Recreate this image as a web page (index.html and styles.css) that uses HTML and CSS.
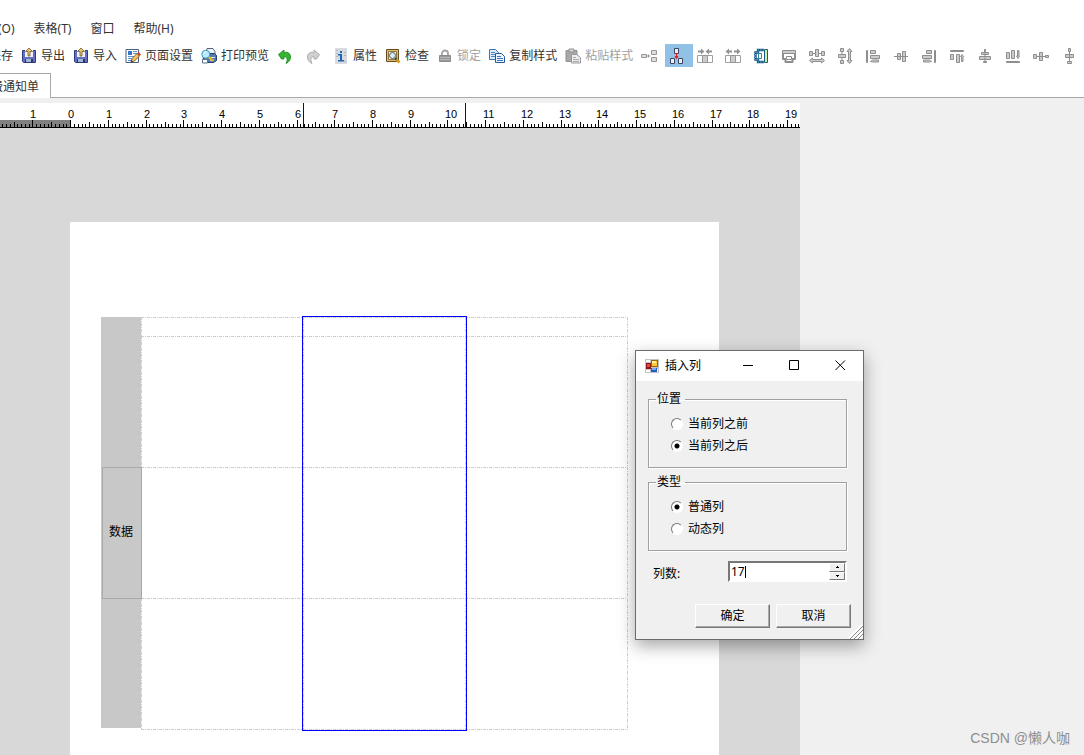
FILE: index.html
```html
<!DOCTYPE html>
<html lang="zh-CN">
<head>
<meta charset="utf-8">
<title>报表设计器</title>
<link rel="stylesheet" href="styles.css">
</head>
<body class="app">
<nav class="menu">
  <button class="menu-item">格式(O)</button>
  <button class="menu-item">表格(T)</button>
  <button class="menu-item">窗口</button>
  <button class="menu-item">帮助(H)</button>
</nav>

<div class="toolbar">
  <button class="tool"><svg class="icon"><use href="#i-disk"/></svg>保存</button>
  <button class="tool"><svg class="icon"><use href="#i-disk"/></svg>导出</button>
  <button class="tool"><svg class="icon"><use href="#i-disk"/></svg>导入</button>
  <button class="tool"><svg class="icon"><use href="#i-page"/></svg>页面设置</button>
  <button class="tool"><svg class="icon"><use href="#i-preview"/></svg>打印预览</button>
  <button class="tool tool-icon" aria-label="撤销"><svg class="icon"><use href="#i-undo"/></svg></button>
  <button class="tool tool-icon" aria-label="重做"><svg class="icon"><use href="#i-redo"/></svg></button>
  <button class="tool"><svg class="icon"><use href="#i-info"/></svg>属性</button>
  <button class="tool"><svg class="icon"><use href="#i-check"/></svg>检查</button>
  <button class="tool" disabled><svg class="icon"><use href="#i-lock"/></svg>锁定</button>
  <button class="tool"><svg class="icon"><use href="#i-copy"/></svg>复制样式</button>
  <button class="tool" disabled><svg class="icon"><use href="#i-paste"/></svg>粘贴样式</button>
  <button class="tool tool-icon" aria-label="合并"><svg class="icon"><use href="#i-merge"/></svg></button>
  <button class="tool tool-icon is-active" aria-label="拆分"><svg class="icon"><use href="#i-split"/></svg></button>
  <button class="tool tool-icon" aria-label="缩小间距"><svg class="icon"><use href="#i-in"/></svg></button>
  <button class="tool tool-icon" aria-label="增大间距"><svg class="icon"><use href="#i-out"/></svg></button>
  <button class="tool tool-icon" aria-label="适应高度"><svg class="icon"><use href="#i-fith"/></svg></button>
  <button class="tool tool-icon" aria-label="适应宽度"><svg class="icon"><use href="#i-fitw"/></svg></button>
  <button class="tool tool-icon" aria-label="等宽"><svg class="icon"><use href="#i-eqw"/></svg></button>
  <button class="tool tool-icon" aria-label="等高"><svg class="icon"><use href="#i-eqh"/></svg></button>
  <button class="tool tool-icon" aria-label="左对齐"><svg class="icon"><use href="#i-left"/></svg></button>
  <button class="tool tool-icon" aria-label="垂直居中"><svg class="icon"><use href="#i-mid"/></svg></button>
  <button class="tool tool-icon" aria-label="右对齐"><svg class="icon"><use href="#i-right"/></svg></button>
  <button class="tool tool-icon" aria-label="顶端对齐"><svg class="icon"><use href="#i-top"/></svg></button>
  <button class="tool tool-icon" aria-label="水平居中"><svg class="icon"><use href="#i-center"/></svg></button>
  <button class="tool tool-icon" aria-label="底端对齐"><svg class="icon"><use href="#i-bottom"/></svg></button>
  <button class="tool tool-icon" aria-label="横向分布"><svg class="icon"><use href="#i-disth"/></svg></button>
  <button class="tool tool-icon" aria-label="纵向分布"><svg class="icon"><use href="#i-distv"/></svg></button>
</div>

<div class="tabs">
  <button class="tab">费通知单</button>
</div>

<main class="workspace">
  <section class="designer">
    <svg class="ruler" id="ruler" aria-label="标尺"></svg>
    <div class="canvas">
      <div class="paper">
        <div class="bands">
          <div class="band-label">数据</div>
        </div>
        <div class="cells">
          <div class="cell"></div><div class="cell"></div><div class="cell"></div>
          <div class="cell"></div><div class="cell"></div><div class="cell"></div>
          <div class="cell"></div><div class="cell"></div><div class="cell"></div>
          <div class="cell"></div><div class="cell"></div><div class="cell"></div>
          <div class="selection"></div>
        </div>
      </div>
    </div>
  </section>
</main>

<form class="dialog" role="dialog" aria-labelledby="dialog-title">
  <header class="titlebar">
    <svg class="app-icon" viewBox="0 0 14 14" shape-rendering="crispEdges">
      <path fill="#c3c3c3" d="M0 0h14v14H0z"/>
      <path fill="#fff" d="M1 1h4v2H1zM1 11h3v2H1zM12 10h1v3h-1zM4 11h1v2H4z"/>
      <path fill="#8d1515" d="M1 4h5v6H1z"/><path fill="#e04b38" d="M2 5h3v3H2z"/>
      <path fill="#9a6a00" d="M6 1h7v7H6z"/><path fill="#ffc83a" d="M7 2h5v5H7z"/><path fill="#fff0a0" d="M7 2h4v2H7z"/>
      <path fill="#2559c5" d="M6 9h6v4H6z"/><path fill="#78aaf5" d="M7 9h4v2H7z"/>
    </svg>
    <h1 class="dialog-title" id="dialog-title">插入列</h1>
    <button type="button" class="caption" aria-label="最小化"><svg class="glyph" viewBox="0 0 11 11"><path d="M0 5.500h10"/></svg></button>
    <button type="button" class="caption" aria-label="最大化"><svg class="glyph" viewBox="0 0 11 11"><path d="M.5.5h9v9h-9z"/></svg></button>
    <button type="button" class="caption" aria-label="关闭"><svg class="glyph" viewBox="0 0 11 11"><path d="M.5.5l9.500 9.500M10 .5L.5 10"/></svg></button>
  </header>
  <div class="dialog-body">
    <fieldset class="group">
      <legend class="group-title">位置</legend>
      <label class="option"><input class="radio" type="radio" name="pos">当前列之前</label>
      <label class="option"><input class="radio" type="radio" name="pos" checked>当前列之后</label>
    </fieldset>
    <fieldset class="group">
      <legend class="group-title">类型</legend>
      <label class="option"><input class="radio" type="radio" name="kind" checked>普通列</label>
      <label class="option"><input class="radio" type="radio" name="kind">动态列</label>
    </fieldset>
    <div class="field">
      <label for="count">列数:</label>
      <div class="spin">
        <input class="spin-input" id="count" type="text" value="17">
        <span class="caret"></span>
        <div class="spin-buttons">
          <button type="button" class="spin-button" aria-label="增加"><svg class="arrow" viewBox="0 0 3 2"><path d="M1 0h1v1h1v1H0V1h1z"/></svg></button>
          <button type="button" class="spin-button" aria-label="减少"><svg class="arrow" viewBox="0 0 3 2"><path d="M0 0h3v1H2v1H1V1H0z"/></svg></button>
        </div>
      </div>
    </div>
    <div class="actions">
      <button type="button" class="push">确定</button>
      <button type="button" class="push">取消</button>
    </div>
  </div>
  <svg class="grip" viewBox="0 0 14 14"><path class="grip-light" d="M0 14L14 0M5 14l9-9M9 14l5-5"/><path class="grip-dark" d="M1 14L14 1M5 14l9-9M9 14l5-5"/></svg>
</form>

<p class="credit">CSDN @懒人咖</p>

<svg class="sprite" aria-hidden="true">
  <symbol id="i-disk" viewBox="0 0 16 16">
    <path d="M1.500 2.500h13v12h-12l-1-1z" fill="#6570c4" stroke="#303a80"/>
    <path d="M4 2h8v7H4z" fill="#eef0fa"/><path d="M4 11h8v4H4z" fill="#2c3570"/><path d="M5 11h5v3H5z" fill="#9fb9d5"/>
    <path d="M8 0l3.500 3.500H9V8H7V3.500H4.500z" fill="#e9c46c" stroke="#5e4a1d" stroke-width=".7"/>
  </symbol>
  <symbol id="i-page" viewBox="0 0 16 16">
    <path d="M1 1.500h12.500v13H1z" fill="#fff" stroke="#4c6078"/>
    <path d="M3 3h4v4H3z" fill="#3479c8"/><path d="M8 3.500h4M8 5.500h4M3 8.500h8M3 10.500h6M3 12.500h4" stroke="#5793cf"/>
    <path d="M6 14l1-3.500 5-5 2.500 2.500-5 5z" fill="#f6c260" stroke="#70491e" stroke-width=".8"/>
    <path d="M12 5.500L13.500 4 16 6.500 14.500 8z" fill="#d33c27"/><path d="M6 14l.5-1.700L8 13.500z" fill="#222"/>
  </symbol>
  <symbol id="i-preview" viewBox="0 0 16 16">
    <path d="M6 .5h6l2 3v3H5z" fill="#eef4fb" stroke="#50647a"/>
    <path d="M3 5.500h10.500l2 2v5l-3 2H5l-3-2z" fill="#5377ae" stroke="#253d6c"/>
    <path d="M9 9.500h5M9 12h4" stroke="#dce8f5"/>
    <circle cx="4.800" cy="6.300" r="4" fill="#b8ecff" stroke="#3c96bd"/><path d="M3 5l2-2" stroke="#fff"/>
    <path d="M8 9l3.500 4" stroke="#e5bd20" stroke-width="2.400"/>
    <path d="M1.500 11.500h5v3.500h-5z" fill="#fff" stroke="#5d7290"/>
  </symbol>
  <symbol id="i-undo" viewBox="0 0 16 16"><path d="M1.500 6.500L7 2v2.500c4-1 6.500 1 6.500 4.500 0 3-1.500 5-4.500 6.500 1-2 1.500-4 .8-5.300C9.300 9 8.300 8.500 7 8.800V11H4.500z" fill="#35b52e" stroke="#14851a" stroke-width=".8"/></symbol>
  <symbol id="i-redo" viewBox="0 0 16 16"><path d="M14.500 6.500L9 2v2.500C5 3.500 2.500 5.500 2.500 9c0 3 1.500 5 4.500 6.500-1-2-1.500-4-.8-5.300C6.700 9 7.700 8.500 9 8.800V11h2.500z" fill="#d0d0d0" stroke="#a0a0a0" stroke-width=".8"/></symbol>
  <symbol id="i-info" viewBox="0 0 16 16"><path d="M2 0h12v16H2z" fill="#d8dce0"/><path d="M3 2.500h2M3 5.500h2M3 8.500h2M11 4.500h2M11 7.500h2M11 13.500h2" stroke="#aeb6c0"/><path d="M7 3h2v2H7zM5 6h4v6h2v1.500H5V12h2V7.500H5z" fill="#1d65b2"/></symbol>
  <symbol id="i-check" viewBox="0 0 16 16">
    <path d="M1.500 1.500h12v12h-12z" fill="#e1bd70" stroke="#654b1e"/><path d="M3.500 3.500h8v8h-8z" fill="#fff7d9" stroke="#8f743d"/>
    <circle cx="7.500" cy="7.500" r="3" fill="#dcecf0" stroke="#48636d"/><path d="M10 10l2 2" stroke="#444" stroke-width="2"/><path d="M11.500 11.500l3 3" stroke="#d49a20" stroke-width="2.600"/>
  </symbol>
  <symbol id="i-lock" viewBox="0 0 16 16"><path d="M5 7.500V5.500a3 3 0 016 0v2" fill="none" stroke="#a5a5a5" stroke-width="1.800"/><path d="M2.500 7.500h11v6h-11z" fill="#9b9b9b" stroke="#8c8c8c"/><path d="M3 9.500h10M3 11.500h10" stroke="#b4b4b4"/></symbol>
  <symbol id="i-copy" viewBox="0 0 16 16">
    <path d="M.5 1.500h6l3 3v7h-9z" fill="#dceafa" stroke="#3976bd"/><path d="M2 4.500h4M2 6.500h5M2 8.500h4" stroke="#4c88c7"/>
    <path d="M6.500 5.500h6l3 3v6h-9z" fill="#eef5fd" stroke="#24599d"/><path d="M8 8.500h4M8 10.500h6M8 12.500h6" stroke="#3976bd"/>
  </symbol>
  <symbol id="i-paste" viewBox="0 0 16 16"><path d="M1 2.500h11v11H1z" fill="#a8a8a8" stroke="#919191"/><path d="M4 1h5v3H4z" fill="#d6d6d6" stroke="#919191"/><path d="M6.500 6.500h5l4 3v5.500h-9z" fill="#eee" stroke="#999"/><path d="M8 9.500h3M8 11.500h6M8 13.500h6" stroke="#aaa"/></symbol>
  <symbol id="i-merge" viewBox="0 0 16 16"><g fill="#ddd" stroke="#979797"><path d="M.5 6.500h5v3h-5zM10.500 2.500h5v4h-5zM10.500 9.500h5v4h-5z"/><path d="M6 8h3.500M7.500 6.500v3" fill="none"/></g></symbol>
  <symbol id="i-split" viewBox="0 0 16 16"><g fill="#e8effa" stroke="#3d4663"><path d="M5.500.5h4v5h-4zM1.500 10.500h4v5h-4zM9.500 10.500h4v5h-4z"/></g><path d="M7.500 5v4M6 8.500h3l-1.500 2z" stroke="#e51c23" fill="#e51c23"/></symbol>
  <symbol id="i-in" viewBox="0 0 16 16"><path d="M.5 7.500h15v7H.5z" fill="#fff" stroke="#a0a0a0"/><path d="M5.500 7.500h5v7h-5z" fill="#ccc" stroke="#969696"/><path d="M1 3.500h4M15 3.500h-4" stroke="#929292" stroke-width="2"/><path d="M4 .5l3.500 3L4 6.500zM12 .5l-3.500 3 3.500 3z" fill="#929292"/></symbol>
  <symbol id="i-out" viewBox="0 0 16 16"><path d="M.5 7.500h15v7H.5z" fill="#fff" stroke="#a0a0a0"/><path d="M5.500 7.500h5v7h-5z" fill="#ccc" stroke="#969696"/><path d="M3 3.500h4M13 3.500H9" stroke="#929292" stroke-width="2"/><path d="M4 .5l-3.500 3 3.500 3zM12 .5l3.500 3-3.500 3z" fill="#929292"/></symbol>
  <symbol id="i-fith" viewBox="0 0 16 16"><path d="M11.500 1.500h3v13h-3z" fill="#c8eeb2" stroke="#1d5d7c"/><path d="M11 2H5v2.500H2.500v7H5V14h6" fill="#fff" stroke="#174f7c" stroke-width="2.400"/><path d="M11 2H5v2.500H2.500v7H5V14h6" fill="none" stroke="#5bb4dc" stroke-width="1" stroke-dasharray="1.500 1"/><path d="M5.500 5.500h3v5h-3z" fill="#fff" stroke="#2c82a7"/></symbol>
  <symbol id="i-fitw" viewBox="0 0 16 16"><g class="shape"><path d="M1.500 2.500h13v3h-13z"/><path d="M2 5.500V11h2.500v3h7v-3H14V5.500" fill="none" stroke-width="2"/><path d="M5.500 8.500h5v3h-5z" fill="#fff"/></g></symbol>
  <symbol id="i-eqw" viewBox="0 0 16 16"><g class="shape"><path d="M.5 3.500h3v4h-3zM6.500 1.500h3v7h-3zM12.500 3.500h3v4h-3zM4 5.500h3M9 5.500h3M.5 12.500l3-2.500v1.500h9V10l3 2.500-3 2.500v-1.500h-9V15z"/></g></symbol>
  <symbol id="i-eqh" viewBox="0 0 16 16"><g class="shape"><path d="M3.500.5h3v3h-3zM1.500 6.500h7v3h-7zM3.500 12.500h3v3h-3zM5 4v3M5 9v3M12.500.5l2.500 3h-1.500v9H15l-2.500 3-2.500-3h1.500v-9H10z"/></g></symbol>
  <symbol id="i-left" viewBox="0 0 16 16"><g class="shape"><path d="M1.500 2.500h1v12h-1zM5.500 2.500h5v3h-5zM5.500 7.500h9v3h-9zM5.500 13.500l2-1.500h6v2h-6z"/></g></symbol>
  <symbol id="i-mid" viewBox="0 0 16 16"><g class="shape"><path d="M1 8.500h14M4.500 5.500h3v6h-3zM9.500 3.500h3v10h-3z"/></g></symbol>
  <symbol id="i-right" viewBox="0 0 16 16"><g class="shape"><path d="M13.500 2.500h1v12h-1zM5.500 2.500h5v3h-5zM1.500 7.500h9v3h-9zM10.500 13.500l-2-1.500h-6v2h6z"/></g></symbol>
  <symbol id="i-top" viewBox="0 0 16 16"><g class="shape"><path d="M1.500 2.500h13v1h-13zM1.500 6.500h3v5h-3zM7.500 6.500h3v8h-3zM13 6.500l1.500 2H14v5h-1.500v-5h-1z"/></g></symbol>
  <symbol id="i-center" viewBox="0 0 16 16"><g class="shape"><path d="M8 1v14M7.500 1.500h1v2h-1zM4.500 4.500h7v2h-7zM2.500 8.500h11v3h-11zM6.500 13.500h3v1h-3z"/></g></symbol>
  <symbol id="i-bottom" viewBox="0 0 16 16"><g class="shape"><path d="M1.500 13.500h13v1h-13zM1.500 4.500h3v6h-3zM6.500 2.500h3v8h-3zM12.500 2.500H14V8h.5L13 10.500 11.500 8h1z"/></g></symbol>
  <symbol id="i-disth" viewBox="0 0 16 16"><g class="shape"><path d="M3 8.500h10M.5 6.500h3v4h-3zM6.500 4.500h3v8h-3zM12.500 7.500h3v2h-3z"/></g></symbol>
  <symbol id="i-distv" viewBox="0 0 16 16"><g class="shape"><path d="M8.500 3v10M7.500.5h2v3h-2zM4.500 6.500h8v3h-8zM6.500 13.500h4v2h-4z"/></g></symbol>
</svg>
<script src="ruler.js"></script>
</body>
</html>
```

FILE: ruler.js
```js
// Draws a centimetre ruler; the origin is the left edge of the paper.
(function () {
  var NS = "http://www.w3.org/2000/svg";
  var ruler = document.getElementById("ruler");
  var origin = 70.7, cm = 37.73, base = 24, right = 800;

  function add(name, attrs, text) {
    var el = document.createElementNS(NS, name);
    for (var key in attrs) el.setAttribute(key, attrs[key]);
    if (text !== undefined) el.textContent = text;
    ruler.appendChild(el);
  }

  add("rect", { class: "ruler-margin", x: 0, y: 17, width: 70, height: 7 });
  var d = "";
  for (var mm = -18; ; mm++) {
    var x = Math.floor(origin + mm * cm / 10);
    if (x >= right) break;
    var len = mm % 10 === 0 ? 7 : mm % 5 === 0 ? 5 : 3;
    d += "M" + (x + 0.5) + " " + (base - len) + "v" + len;
    if (mm % 10 === 0) {
      add("text", { class: "ruler-text", x: x - 2, y: 15 }, Math.abs(mm / 10));
    }
  }
  add("path", { class: "ruler-ticks", d: d + "M0 24.5h" + right });
  add("path", { class: "ruler-marks", d: "M303.5 0v24M465.5 0v24" });
})();
```

FILE: styles.css
```css
* {
  box-sizing: border-box;
}

.app {
  display: flex;
  flex-direction: column;
  height: 100vh;
  margin: 0;
  overflow: hidden;
  background: #fff;
  color: #333;
  font: 12px/16px "Noto Sans", "Noto Sans CJK SC", sans-serif;
}

button,
input {
  margin: 0;
  font: inherit;
  color: inherit;
}

.sprite {
  position: absolute;
  width: 0;
  height: 0;
}

/* Menu, toolbar, tabs */

.menu {
  display: flex;
  flex: none;
  gap: 19px;
  margin-left: -26px;
  padding: 21px 0 7px;
}

.menu-item {
  flex: none;
  padding: 0;
  border: 0;
  background: none;
}

.toolbar {
  display: flex;
  flex: none;
  height: 24px;
  margin-left: -35px;
  overflow: hidden;
}

.tool {
  display: flex;
  flex: none;
  align-items: center;
  gap: 4px;
  height: 23px;
  padding: 0 4px;
  border: 0;
  background: none;
  white-space: nowrap;
}

.tool:disabled {
  color: #a0a0a0;
}

.tool-icon {
  padding-right: 8px;
}

.tool.is-active {
  background: #91c1e4;
}

.icon {
  flex: none;
  width: 16px;
  height: 16px;
}

.shape {
  fill: #ccc;
  stroke: #8e8e8e;
  stroke-linejoin: round;
}

.tabs {
  display: flex;
  flex: none;
  padding-top: 5px;
}

.tabs::after {
  flex: 1;
  border-bottom: 1px solid #a5aaa5;
  content: "";
}

.tab {
  height: 25px;
  margin-left: -21px;
  padding: 1px 11px 0;
  border: 1px solid #a5aaa5;
  border-bottom: 0;
  background: #fff;
}

/* Designer */

.workspace {
  display: flex;
  flex: 1;
  min-height: 0;
  padding-top: 5px;
  background: #f0f0f0;
}

.designer {
  display: flex;
  flex-direction: column;
  width: 800px;
}

.ruler {
  flex: none;
  width: 100%;
  height: 25px;
  background: #fff;
}

.ruler-margin {
  fill: #808080;
}

.ruler-text {
  fill: #000;
  font: 11px "Liberation Sans", sans-serif;
}

.ruler-ticks {
  stroke: #000;
}

.ruler-marks {
  stroke: #0000c8;
}

.canvas {
  display: flex;
  flex: 1;
  min-height: 0;
  padding: 94px 81px 0 70px;
  background: #d8d8d8;
}

.paper {
  display: flex;
  flex: 1;
  padding: 95px 91px 0 31px;
  background: #fff;
}

.bands,
.cells {
  display: grid;
  grid-template-rows: 19px repeat(3, 131px);
}

.bands {
  width: 40px;
  height: 411px;
  background: #c8c8c8;
}

.band-label {
  display: flex;
  grid-row: 3;
  align-items: center;
  justify-content: center;
  height: 132px;
  margin: 0 -1px 0 1px;
  padding: 0 2px 2px 0;
  border: 1px solid #a9a9a9;
  color: #000;
  z-index: 1;
}

.cells {
  --across: repeating-linear-gradient(to right, #ccc 0 3px, transparent 3px 4px, #ccc 4px 5px, transparent 5px 6px);
  --down: repeating-linear-gradient(to bottom, #ccc 0 3px, transparent 3px 4px, #ccc 4px 5px, transparent 5px 6px);
  flex: 1;
  grid-template-columns: repeat(3, 1fr);
  height: 413px;
  padding-right: 1px;
  background: var(--across) bottom / 100% 1px no-repeat, var(--down) right / 1px 100% no-repeat;
}

.cell {
  background: var(--across) top / 100% 1px no-repeat, var(--down) left / 1px 100% no-repeat;
}

.selection {
  grid-row: 1 / -1;
  grid-column: 2;
  height: 415px;
  margin: -1px -2px 0 -1px;
  border: 1px solid #00f;
}

.cell:nth-child(-n+3) { grid-row: 1; }
.cell:nth-child(n+4):nth-child(-n+6) { grid-row: 2; }
.cell:nth-child(n+7):nth-child(-n+9) { grid-row: 3; }
.cell:nth-child(n+10):nth-child(-n+12) { grid-row: 4; }
.cell:nth-child(3n+1) { grid-column: 1; }
.cell:nth-child(3n+2) { grid-column: 2; }
.cell:nth-child(3n) { grid-column: 3; }

/* Dialog window */

.dialog {
  position: absolute;
  top: 350px;
  left: 635px;
  width: 229px;
  border: 1px solid #6b6b6b;
  background: #f0f0f0;
  box-shadow: 0 6px 16px rgba(0, 0, 0, .35);
  color: #000;
}

.titlebar {
  display: flex;
  align-items: center;
  height: 30px;
  padding-left: 9px;
  background: #fff;
}

.app-icon {
  width: 14px;
  height: 14px;
}

.dialog-title {
  flex: 1;
  margin: 0 0 0 6px;
  font-size: 12px;
  font-weight: 400;
}

.caption {
  display: grid;
  width: 46px;
  height: 30px;
  padding: 0 0 2px;
  border: 0;
  background: none;
  place-items: center;
}

.glyph {
  width: 11px;
  height: 11px;
  fill: none;
  stroke: #000;
}

.dialog-body {
  padding: 10px 12px 11px;
}

.group {
  display: grid;
  gap: 6px;
  min-width: 0;
  margin: 0 4px 6px 0;
  padding: 9px 0 13px 22px;
  border: 1px solid #a0a0a0;
  box-shadow: 1px 1px #fff, inset 1px 1px #fff;
}

.group-title {
  margin-left: -15px;
  padding: 0 4px 0 1px;
}

.option {
  display: flex;
  align-items: center;
  gap: 5px;
}

.radio {
  width: 12px;
  height: 12px;
  border: 1px solid;
  border-color: #777 #fff #fff #777;
  border-radius: 50%;
  appearance: none;
  background: #fff;
}

.radio:checked {
  background: radial-gradient(circle, #000 0 2px, #fff 3px);
}

.field {
  display: flex;
  align-items: flex-end;
  justify-content: space-between;
  margin: 10px 4px 22px 5px;
}

.spin {
  display: flex;
  position: relative;
  width: 119px;
  height: 21px;
  border: 2px solid;
  border-color: #777 #fff #fff #777;
  background: #fff;
}

.spin-input {
  flex: 1;
  min-width: 0;
  padding: 0 1px;
  border: 0;
  background: none;
  outline: 0;
}

.caret {
  position: absolute;
  top: 3px;
  left: 15px;
  width: 1px;
  height: 12px;
  background: #000;
}

.spin-buttons {
  display: flex;
  flex-direction: column;
  width: 16px;
}

.spin-button {
  display: grid;
  flex: 1;
  padding: 0;
  border: 1px solid;
  border-color: #fff #777 #777 #fff;
  background: #f0f0f0;
  place-items: center;
}

.arrow {
  width: 3px;
  height: 2px;
}

.actions {
  display: flex;
  justify-content: flex-end;
  gap: 6px;
}

.push {
  width: 75px;
  height: 24px;
  padding: 0;
  border: 1px solid;
  border-color: #fff #777 #777 #fff;
  background: #f0f0f0;
  box-shadow: inset -1px -1px #a8a8a8;
}

.grip {
  position: absolute;
  right: 0;
  bottom: 0;
  width: 14px;
  height: 14px;
}

.grip-light {
  stroke: #fff;
  stroke-width: 3;
}

.grip-dark {
  stroke: #858585;
}

.credit {
  position: absolute;
  right: 14px;
  bottom: 7px;
  margin: 0;
  color: #8e8e8e;
  font: 14px/20px "Liberation Sans", "Noto Sans CJK SC", sans-serif;
}
```
